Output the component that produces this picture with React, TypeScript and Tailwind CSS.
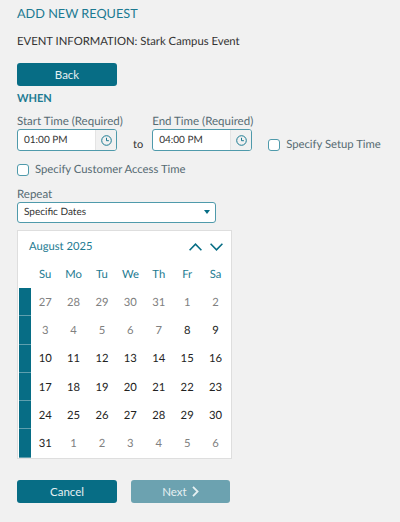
const days = ["Su", "Mo", "Tu", "We", "Th", "Fr", "Sa"]

// [label, muted]
const weeks: [string, boolean][][] = [
  [["27", true], ["28", true], ["29", true], ["30", true], ["31", true], ["1", true], ["2", true]],
  [["3", true], ["4", true], ["5", true], ["6", true], ["7", true], ["8", false], ["9", false]],
  [["10", false], ["11", false], ["12", false], ["13", false], ["14", false], ["15", false], ["16", false]],
  [["17", false], ["18", false], ["19", false], ["20", false], ["21", false], ["22", false], ["23", false]],
  [["24", false], ["25", false], ["26", false], ["27", false], ["28", false], ["29", false], ["30", false]],
  [["31", false], ["1", true], ["2", true], ["3", true], ["4", true], ["5", true], ["6", true]],
]

function ClockIcon() {
  return (
    <svg width="11" height="11" viewBox="0 0 11 11" fill="none" stroke="#1c7a91" strokeWidth="1">
      <circle cx="5.5" cy="5.5" r="4.8" />
      <path d="M5.5 2.8v2.9h2.4" />
    </svg>
  )
}

function Chevron({ up }: { up?: boolean }) {
  return (
    <svg width="13" height="8" viewBox="0 0 13 8" fill="none" stroke="#076d85" strokeWidth="1.6">
      <path d={up ? "M.6 7.2 6.5 1.2l5.9 6" : "M.6.8l5.9 6 5.9-6"} />
    </svg>
  )
}

function TimeField({ label, value }: { label: string; value: string }) {
  return (
    <div className="w-[100px]">
      <div className="h-[16px] whitespace-nowrap text-[11.5px] leading-[18px] text-[#566b73]">{label}</div>
      <div className="flex h-[22px] w-[100px] overflow-hidden rounded-[3px] border border-[#4f9aab] bg-white">
        <div className="flex-1 pl-[6px] text-[10px] leading-[20px] text-[#333]">{value}</div>
        <div className="flex w-[21px] items-center justify-center border-l border-[#e4e4e4] bg-[#f1f1f1]">
          <ClockIcon />
        </div>
      </div>
    </div>
  )
}

function Checkbox() {
  return <div className="h-[12px] w-[12px] rounded-[3px] border border-[#4f9aab] bg-white" />
}

export default function App() {
  return (
    <div className="h-[522px] w-[400px] overflow-hidden bg-[#f1f1f1] px-[17px] pt-[4px] font-['Lato',sans-serif] [text-rendering:geometricPrecision]">
      <h1 className="h-[18px] text-[12.7px] leading-[18px] text-[#1c7a91]">ADD NEW REQUEST</h1>
      <p className="mt-[11px] h-[18px] text-[11.3px] leading-[18px] text-[#333]">EVENT INFORMATION: Stark Campus Event</p>
      <button className="mt-[12px] block h-[23px] w-[100px] rounded-[3px] bg-[#076d85] text-[11.5px] text-[#e6f0f2]">Back</button>
      <h2 className="mt-[4px] h-[18px] text-[11px] font-bold leading-[18px] text-[#1c7a91]">WHEN</h2>

      <div className="mt-[5px] flex items-start">
        <TimeField label="Start Time (Required)" value="01:00 PM" />
        <span className="ml-[16px] mt-[23px] text-[11px] leading-[18px] text-[#333]">to</span>
        <div className="ml-[9px]">
          <TimeField label="End Time (Required)" value="04:00 PM" />
        </div>
        <div className="ml-[16px] mt-[23px] flex h-[18px] items-center gap-[6px]">
          <Checkbox />
          <span className="whitespace-nowrap text-[11.3px] text-[#566b73]">Specify Setup Time</span>
        </div>
      </div>

      <div className="mt-[7px] flex h-[18px] items-center gap-[6px]">
        <Checkbox />
        <span className="whitespace-nowrap text-[11.3px] text-[#566b73]">Specify Customer Access Time</span>
      </div>

      <div className="mt-[8px] h-[15px] text-[11.5px] leading-[16px] text-[#566b73]">Repeat</div>
      <div className="relative h-[21px] w-[199px] rounded-[3px] border border-[#4f9aab] bg-white pl-[6px] text-[10px] leading-[19px] text-[#333]">
        Specific Dates
        <span className="absolute right-[5px] top-[7px] h-0 w-0 border-x-[3px] border-t-[4px] border-x-transparent border-t-[#076d85]" />
      </div>

      <div className="mt-[7px] h-[229px] w-[215px] border border-[#dedede] bg-white pl-[1px]">
        <div className="flex h-[32px] items-center justify-between pl-[10px] pr-[8px]">
          <span className="text-[11.2px] text-[#1c7a91]">August 2025</span>
          <div className="flex items-center gap-[8px]">
            <Chevron up />
            <Chevron />
          </div>
        </div>
        <div className="flex h-[25px] items-center pl-[12px]">
          {days.map((d) => (
            <div key={d} className="w-[28.4px] text-center text-[11.25px] text-[#1c7a91]">{d}</div>
          ))}
        </div>
        {weeks.map((week, i) => (
          <div key={i} className="flex h-[28.3px] items-center">
            <div className="h-full w-[12px] border-b border-[#5f9fae] bg-[#076d85]" />
            {week.map(([label, muted], j) => (
              <div
                key={j}
                className={`w-[28.4px] pt-[2px] text-center text-[11.25px] ${muted ? "text-[#808080]" : "text-[#222]"}`}
              >
                {label}
              </div>
            ))}
          </div>
        ))}
      </div>

      <div className="mt-[21px] flex gap-[14px]">
        <button className="h-[23px] w-[100px] rounded-[3px] bg-[#076d85] text-[11.5px] text-[#e6f0f2]">Cancel</button>
        <button className="flex h-[23px] w-[99px] items-center justify-center gap-[5px] rounded-[3px] bg-[#6ca2b0] text-[11.5px] text-[#e6f0f2]">
          Next
          <svg width="7" height="11" viewBox="0 0 7 11" fill="none" stroke="#e6f0f2" strokeWidth="1.8">
            <path d="M1 .8l4.6 4.7L1 10.2" />
          </svg>
        </button>
      </div>
    </div>
  )
}
